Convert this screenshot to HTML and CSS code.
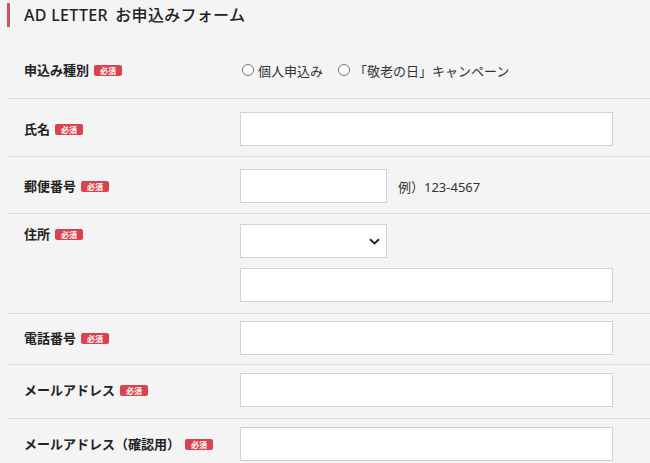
FILE: index.html
```html
<!DOCTYPE html>
<html lang="ja">
<head>
<meta charset="utf-8">
<title>AD LETTER お申込みフォーム</title>
<link rel="stylesheet" href="styles.css">
</head>
<body>
<div class="page">
  <h1 class="title"><span class="brand">AD LETTER</span> お申込みフォーム</h1>
  <form class="form">
    <div class="row row-first">
      <div class="label">申込み種別<span class="req">必須</span></div>
      <div class="field radios">
        <label class="radio"><span class="circle"></span>個人申込み</label>
        <label class="radio"><span class="circle"></span>「敬老の日」キャンペーン</label>
      </div>
    </div>
    <div class="row row-name">
      <div class="label">氏名<span class="req">必須</span></div>
      <div class="field"><div class="input full"></div></div>
    </div>
    <div class="row">
      <div class="label">郵便番号<span class="req">必須</span></div>
      <div class="field inline"><div class="input short"></div><span class="hint">例）123-4567</span></div>
    </div>
    <div class="row row-address">
      <div class="label label-top">住所<span class="req">必須</span></div>
      <div class="field stack">
        <div class="input short select">
          <svg class="chev" width="11" height="7" viewBox="0 0 11 7"><path d="M1 1.2 L5.5 5.5 L10 1.2" fill="none" stroke="#222" stroke-width="1.9"/></svg>
        </div>
        <div class="input full"></div>
      </div>
    </div>
    <div class="row compact">
      <div class="label">電話番号<span class="req">必須</span></div>
      <div class="field"><div class="input full"></div></div>
    </div>
    <div class="row compact mail">
      <div class="label">メールアドレス<span class="req">必須</span></div>
      <div class="field"><div class="input full"></div></div>
    </div>
    <div class="row compact last">
      <div class="label">メールアドレス（確認用）<span class="req">必須</span></div>
      <div class="field"><div class="input full"></div></div>
    </div>
  </form>
</div>
</body>
</html>
```
FILE: styles.css
```css
html, body {
  margin: 0;
  padding: 0;
  background: #f4f4f4;
  color: #222;
  font-family: "Noto Sans", "Noto Sans CJK JP", sans-serif;
}
.page {
  padding-left: 7px;
  height: 463px;
  overflow: hidden;
}
.title {
  margin: 3px 0 0;
  height: 24px;
  line-height: 24px;
  border-left: 3px solid #d9505f;
  padding-left: 14px;
  font-size: 16px;
  font-weight: 500;
  letter-spacing: 0.3px;
  color: #222;
}
.brand {
  margin-right: 3px;
}
.form {
  margin-top: 14px;
}
.row {
  display: grid;
  grid-template-columns: 233px 1fr;
  align-items: center;
  padding: 12px 0 10px;
  border-bottom: 1px solid #dcdcdc;
}
.row-first {
  padding: 12px 0 11px;
}
.row-name {
  padding: 13px 0 10px;
}
.row-address {
  align-items: start;
  padding: 10px 0 11px;
}
.compact {
  padding: 7px 0 9px;
}
.mail {
  padding: 8px 0 11px;
}
.last {
  padding-top: 8px;
  border-bottom: none;
}
.label {
  padding-left: 17px;
  font-size: 13px;
  font-weight: 700;
  line-height: 20px;
  display: flex;
  align-items: center;
}
.label-top {
  padding-top: 0;
}
.req {
  display: inline-block;
  margin-left: 5px;
  background: #d8434f;
  color: #fff;
  font-size: 8px;
  font-weight: 700;
  line-height: 11px;
  padding: 0 6px;
  border-radius: 2px;
}
.field {
  display: flex;
  align-items: center;
}
.stack {
  flex-direction: column;
  align-items: flex-start;
  gap: 10px;
}
.input {
  box-sizing: border-box;
  height: 34px;
  background: #fff;
  border: 1px solid #d2d2d2;
}
.full { width: 373px; }
.short { width: 147px; }
.select {
  position: relative;
}
.chev {
  position: absolute;
  right: 6px;
  top: 13px;
}
.hint {
  margin-left: 11px;
  font-size: 13px;
  color: #333;
}
.radios {
  gap: 13px;
  font-size: 13px;
  color: #333;
  height: 34px;
}
.radio {
  display: flex;
  align-items: center;
  gap: 4px;
}
.circle {
  box-sizing: border-box;
  width: 12px;
  height: 12px;
  margin-left: 2px;
  border: 1px solid #777;
  border-radius: 50%;
  background: #fff;
}
```
